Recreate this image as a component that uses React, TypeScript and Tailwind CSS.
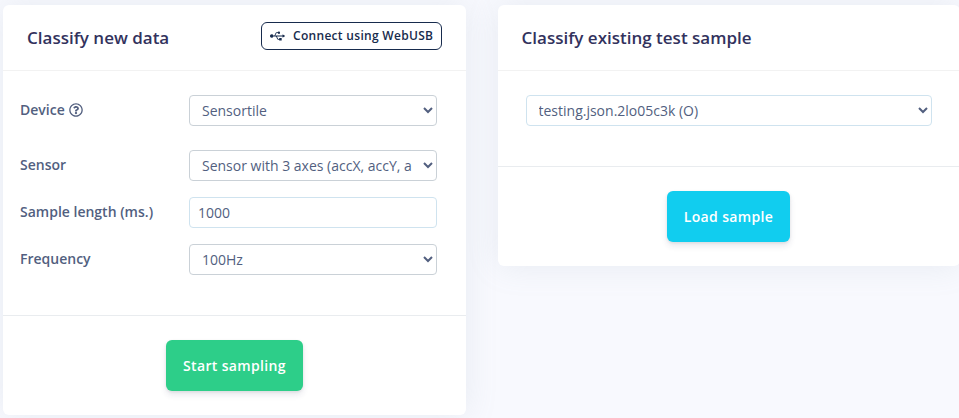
import type { ReactNode } from "react";
import { FaRegQuestionCircle, FaUsb } from "react-icons/fa";

function Card({ title, action, className, children, footer }: {
  title: string;
  action?: ReactNode;
  className: string;
  children: ReactNode;
  footer: ReactNode;
}) {
  return (
    <section className={`flex shrink-0 flex-col rounded-md bg-white shadow-[0_0_32px_0_rgba(136,152,170,0.15)] ${className}`}>
      <header className="flex h-[66px] shrink-0 items-center justify-between border-b border-black/5 pr-6 pl-6">
        <h3 className="text-[17px] leading-[25px] font-semibold text-[#32325d]">{title}</h3>
        {action}
      </header>
      <div className="grow">{children}</div>
      <footer className="flex h-[100px] shrink-0 justify-center border-t border-[#e9ecef] pt-6">{footer}</footer>
    </section>
  );
}

function Row({ label, className, children }: { label: ReactNode; className: string; children: ReactNode }) {
  return (
    <div className={`flex h-[31px] ${className}`}>
      <label className="flex h-[29px] w-[169px] items-center text-[14px] font-semibold text-[#525f7f]">{label}</label>
      {children}
    </div>
  );
}

function Select({ value, className }: { value: string; className: string }) {
  return (
    <select className={`h-[31px] rounded border bg-white px-2 py-1 text-[14px] leading-[21px] text-[#525f7f] ${className}`}>
      <option>{value}</option>
    </select>
  );
}

const bigButton =
  "h-[51px] rounded-md text-[14px] font-semibold tracking-[0.35px] text-white shadow-[0_4px_6px_rgba(50,50,93,0.11),0_1px_3px_rgba(0,0,0,0.08)]";

export default function App() {
  return (
    <main className="flex h-[418px] w-[959px] items-start gap-[31.5px] overflow-hidden bg-[#f8f9fe] pt-[5px] pl-[3px] font-['Open_Sans',sans-serif]">
      <Card
        title="Classify new data"
        className="h-[410px] w-[463px]"
        action={
          <button className="-mt-1 flex h-7 w-[181px] items-center rounded-md border border-[#172b4d] pl-2 text-[12px] font-semibold tracking-[0.3px] text-[#172b4d]">
            <FaUsb className="mr-2 h-3 w-[15px] shrink-0" />
            <span className="whitespace-nowrap">Connect using WebUSB</span>
          </button>
        }
        footer={<button className={`${bigButton} w-[137px] bg-[#2dce89]`}>Start sampling</button>}
      >
        <div className="flex flex-col pt-6 pl-[17px]">
          <Row className="mb-6" label={<>Device<FaRegQuestionCircle className="ml-1 size-[14px]" /></>}>
            <Select value="Sensortile" className="w-[248px] border-[#cad1d7]" />
          </Row>
          <Row className="mb-4" label="Sensor">
            <Select value="Sensor with 3 axes (accX, accY, accZ)" className="w-[248px] border-[#cad1d7]" />
          </Row>
          <Row className="mb-4" label="Sample length (ms.)">
            <input defaultValue="1000" className="h-[31px] w-[248px] rounded border border-[#cfe3ef] px-2 text-[14px] text-[#525f7f]" />
          </Row>
          <Row className="" label="Frequency">
            <Select value="100Hz" className="w-[248px] border-[#cad1d7]" />
          </Row>
        </div>
      </Card>
      <Card
        title="Classify existing test sample"
        className="h-[261px] w-[462px]"
        footer={<button className={`${bigButton} w-[123px] bg-[#11cdef]`}>Load sample</button>}
      >
        <div className="pt-6 pl-7">
          <Select value="testing.json.2lo05c3k (O)" className="w-[406px] border-[#cfe3ef]" />
        </div>
      </Card>
    </main>
  );
}
